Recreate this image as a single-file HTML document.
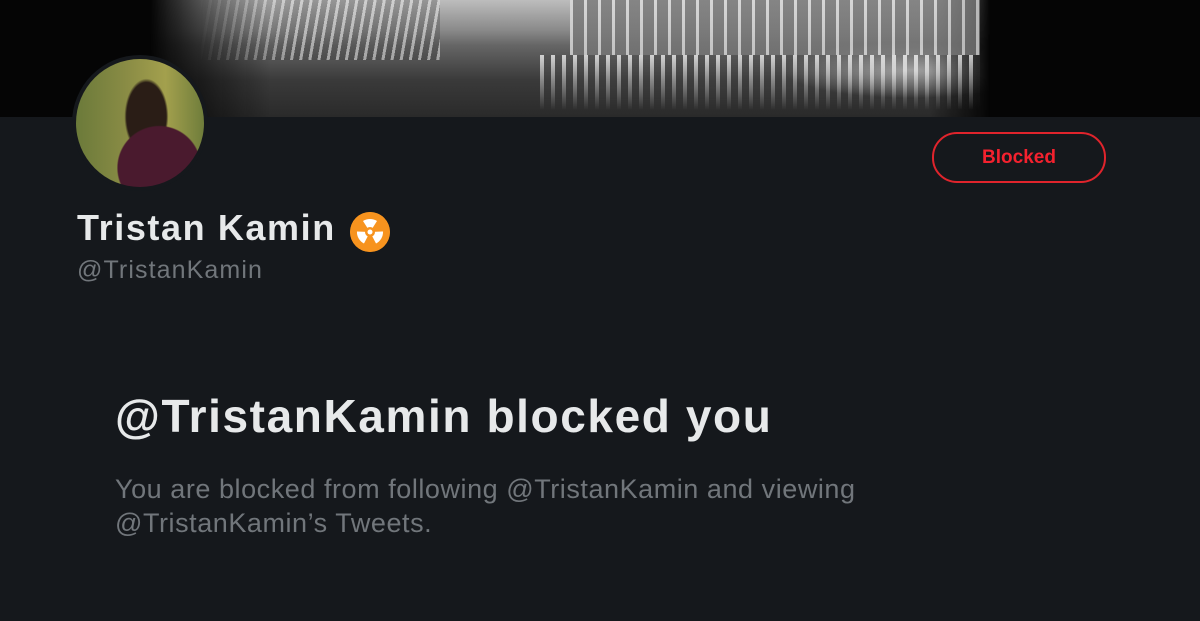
<!DOCTYPE html>
<html><head><meta charset="utf-8"><style>
html,body{margin:0;padding:0;width:1200px;height:621px;overflow:hidden;background:#15181c;font-family:"Liberation Sans",sans-serif;}
.banner{position:absolute;left:0;top:0;width:1200px;height:117px;background:#050505;overflow:hidden}
.img{position:absolute;left:150px;top:0;width:840px;height:117px;
background:
radial-gradient(ellipse 180px 40px at 760px 70px,rgba(230,230,230,.7),rgba(0,0,0,0) 70%),
linear-gradient(180deg,#bdbdbd 0px,#8a8a8a 30px,#666 45px,#3a3a3a 80px,#2a2a2a 117px);
-webkit-mask-image:linear-gradient(90deg,transparent 0,#000 120px,#000 780px,transparent 840px);}
.grid{position:absolute;left:570px;top:0;width:410px;height:55px;background:repeating-linear-gradient(90deg,#ddd 0 3px,#777 3px 14px);opacity:.8}
.lights{position:absolute;left:540px;top:55px;width:440px;height:55px;background:repeating-linear-gradient(90deg,rgba(240,240,240,.8) 0 4px,rgba(80,80,80,.3) 4px 11px);-webkit-mask-image:linear-gradient(180deg,#000,transparent)}
.lleft{position:absolute;left:200px;top:0;width:240px;height:60px;background:repeating-linear-gradient(100deg,rgba(220,220,220,.6) 0 3px,rgba(60,60,60,.3) 3px 9px);-webkit-mask-image:linear-gradient(90deg,transparent,#000 40%,#000)}
.avatar{position:absolute;left:72px;top:55px;width:136px;height:136px;border-radius:50%;background:#15181c}
.photo{position:absolute;left:4px;top:4px;width:128px;height:128px;border-radius:50%;
background:radial-gradient(circle at 65% 85%,#4a1a2e 0,#4a1a2e 30%,transparent 31%),radial-gradient(ellipse 22px 38px at 55% 45%,#2a1d16 0,#2a1d16 90%,transparent 100%),linear-gradient(90deg,#6b7a3a,#8a8c45 40%,#a3a04d 70%,#6f7d3b)}
.btn{position:absolute;left:932px;top:132px;width:170px;height:47px;border:2px solid #e0242c;border-radius:25px;color:#f4212e;font-weight:bold;font-size:19px;text-align:center;line-height:47px}
.name{position:absolute;left:77px;top:207px;color:#e7e9ea;font-weight:bold;font-size:36px;letter-spacing:1.6px}
.badge{position:absolute;left:350px;top:212px;width:40px;height:40px;border-radius:50%;background:#f7931e}
.handle{position:absolute;left:77px;top:256px;color:#71767b;font-size:25px;letter-spacing:1.1px}
h1{position:absolute;left:115px;top:389px;margin:0;color:#e7e9ea;font-size:46px;font-weight:bold;letter-spacing:1.6px}
p{position:absolute;left:115px;top:472px;margin:0;color:#71767b;font-size:27px;line-height:34px;letter-spacing:0.55px}
</style></head><body>
<div class="banner"><div class="img"></div><div class="lleft"></div><div class="grid"></div><div class="lights"></div></div>
<div class="avatar"><div class="photo"></div></div>
<div class="btn">Blocked</div>
<div class="name">Tristan Kamin</div>
<svg class="badge" viewBox="0 0 40 40"><circle cx="20" cy="20" r="20" fill="#f7931e"/><g fill="#fff"><path d="M20 20 L13 9 A13 13 0 0 1 27 9 Z"/><path d="M20 20 L13 9 A13 13 0 0 1 27 9 Z" transform="rotate(120 20 20)"/><path d="M20 20 L13 9 A13 13 0 0 1 27 9 Z" transform="rotate(240 20 20)"/></g><circle cx="20" cy="20" r="5" fill="#f7931e"/><circle cx="20" cy="20" r="2.5" fill="#fff"/></svg>
<div class="handle">@TristanKamin</div>
<h1>@TristanKamin blocked you</h1>
<p>You are blocked from following @TristanKamin and viewing<br>@TristanKamin’s Tweets.</p>
</body></html>
